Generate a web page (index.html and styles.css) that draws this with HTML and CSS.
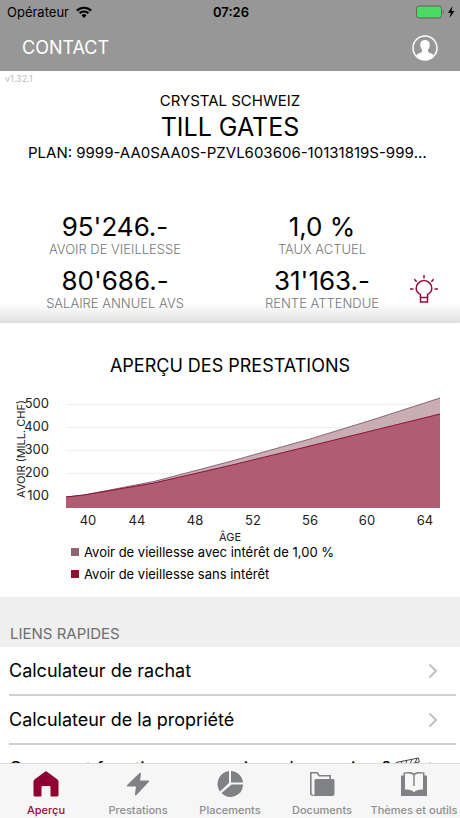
FILE: index.html
```
<!DOCTYPE html>
<html lang="fr">
<head>
    <meta charset="UTF-8">
    <meta name="viewport" content="width=device-width, initial-scale=1.0">
    <title>Aperçu</title>
    <link rel="stylesheet" href="styles.css">
</head>
<body>

<header class="topbar">
    <div class="status">
        <div class="carrier">
            <span>Opérateur</span>
            <svg width="16" height="12" viewBox="0 0 16 12" fill="none" stroke="#000" stroke-width="2.2">
                <path d="M1 4.6a10 10 0 0 1 14 0"/>
                <path d="M3.6 7.3a6.3 6.3 0 0 1 8.8 0"/>
                <path d="M8 12L5.500 9.300a3.600 3.600 0 0 1 5 0z" fill="#000" stroke="none"/>
            </svg>
        </div>
        <time class="clock">07:26</time>
        <div class="battery">
            <svg width="40" height="14" viewBox="0 0 40 14">
                <rect x="1.500" y="1" width="25" height="12" rx="2.500" fill="#4cd964" stroke="#626262"/>
                <path d="M28 5v4c1-.5 1-3.500 0-4z" fill="#626262"/>
                <path d="M37.500 1L33 7.800h2.800L34.500 13 39.500 6h-3z" fill="#000"/>
            </svg>
        </div>
    </div>
    <nav class="navbar">
        <a class="contact" href="#contact">CONTACT</a>
        <button class="profile" type="button" aria-label="Profil">
            <svg width="26" height="26" viewBox="0 0 26 26">
                <circle cx="13" cy="13" r="12" fill="none" stroke="#fff" stroke-width="1.500"/>
                <path d="M13 5c3.200 0 4.900 2.200 4.700 5.200-.1 2-.8 3.400-1.700 4.400v1.900c.3 1.500 4.500 1.700 5.800 4A12 12 0 0 1 13 25a12 12 0 0 1-8.800-4.500c1.300-2.300 5.500-2.500 5.800-4v-1.900c-.9-1-1.600-2.400-1.700-4.400C8.100 7.200 9.800 5 13 5z" fill="#fff"/>
            </svg>
        </button>
    </nav>
</header>

<main class="content">
    <section class="summary">
        <p class="version">v1.32.1</p>
        <p class="company">CRYSTAL SCHWEIZ</p>
        <h1>TILL GATES</h1>
        <p class="plan">PLAN: 9999-AA0SAA0S-PZVL603606-10131819S-99999999</p>

        <div class="figures">
            <div class="figure">
                <strong>95'246.-</strong>
                <span>AVOIR DE VIEILLESSE</span>
            </div>
            <div class="figure">
                <strong>1,0 %</strong>
                <span>TAUX ACTUEL</span>
            </div>
            <div class="figure first">
                <strong>80'686.-</strong>
                <span>SALAIRE ANNUEL AVS</span>
            </div>
            <div class="figure">
                <strong>31'163.-</strong>
                <span>RENTE ATTENDUE</span>
            </div>
            <button class="tip" type="button" aria-label="Conseil">
                <svg width="28" height="28" viewBox="0 0 28 28" fill="none" stroke="#970c39" stroke-width="1.500">
                    <path d="M10.500 22.500v-3.200c-2.600-1.300-4.300-3.300-4.300-5.900a7.800 7.800 0 0 1 15.600 0c0 2.600-1.700 4.600-4.300 5.900v3.200"/>
                    <path d="M10.500 22.500h7v4.500h-7z"/>
                    <path d="M14 0v3.500M0 14h3.500M24.500 14H28M4.300 4.300l2.300 2.300M23.700 4.300l-2.300 2.300"/>
                </svg>
            </button>
        </div>
    </section>

    <section class="benefits">
        <h2>APERÇU DES PRESTATIONS</h2>
        <svg class="chart" viewBox="0 0 460 148" role="img" aria-label="Évolution de l'avoir de vieillesse">
            <path class="grid-line" d="M66 11.500H440M66 34.500H440M66 57.500H440M66 80.500H440M66 103.500H440"/>
            <path class="area-with" d="M66 104L84 102 154 88.500 230 68.500 310 46 375 26 440 5V115H66z"/>
            <path class="line-with" d="M66 104L84 102 154 88.500 230 68.500 310 46 375 26 440 5"/>
            <path class="area-without" d="M66 104L84 102 154 90 230 72.500 310 53 375 37 440 21V115H66z"/>
            <path class="line-without" d="M66 104L84 102 154 90 230 72.500 310 53 375 37 440 21"/>
            <g class="y-labels">
                <text x="49" y="15">500</text>
                <text x="49" y="38">400</text>
                <text x="49" y="61">300</text>
                <text x="49" y="84">200</text>
                <text x="49" y="107">100</text>
            </g>
            <g class="x-labels">
                <text x="88" y="132">40</text>
                <text x="137" y="132">44</text>
                <text x="195" y="132">48</text>
                <text x="253" y="132">52</text>
                <text x="310" y="132">56</text>
                <text x="367" y="132">60</text>
                <text x="425" y="132">64</text>
            </g>
            <text class="axis-title" x="230" y="148">ÂGE</text>
            <text class="axis-title" transform="translate(25 56) rotate(-90)">AVOIR (MILL. CHF)</text>
        </svg>
        <ul class="legend">
            <li class="with">Avoir de vieillesse avec intérêt de 1,00 %</li>
            <li class="without">Avoir de vieillesse sans intérêt</li>
        </ul>
    </section>

    <section class="links">
        <h3>LIENS RAPIDES</h3>
        <a href="#rachat">
            <span>Calculateur de rachat</span>
            <svg class="chevron" width="10" height="16" viewBox="0 0 10 16"><path d="M1.500 1.500L8 8l-6.500 6.500"/></svg>
        </a>
        <a href="#propriete">
            <span>Calculateur de la propriété</span>
            <svg class="chevron" width="10" height="16" viewBox="0 0 10 16"><path d="M1.500 1.500L8 8l-6.500 6.500"/></svg>
        </a>
        <a href="#caisse">
            <span>Comment fonctionne ma caisse de pension ?</span>
            <svg class="clap" width="26" height="24" viewBox="0 0 26 24" fill="none" stroke="#444">
                <path d="M1 5.500L23.500 1l.8 4L2 9.500zM2 9.500h22V23H2z"/>
                <path d="M5 9l2-4.500M10 8l2-4.500M15 7l2-4.500M20 6l2-4.500"/>
            </svg>
            <svg class="chevron" width="10" height="16" viewBox="0 0 10 16"><path d="M1.500 1.500L8 8l-6.500 6.500"/></svg>
        </a>
    </section>
</main>

<nav class="tabbar">
    <a class="active" href="#apercu">
        <svg width="26" height="26" viewBox="0 0 26 26"><path d="M12 .7q1-.8 2 0L24.500 8.500q1 .8 1 2V24q0 1.500-1.500 1.500h-5.500q-1 0-1-1V16q0-1-1-1h-7q-1 0-1 1v8.500q0 1-1 1H2Q.5 25.500.5 24V10.500q0-1.200 1-2z"/></svg>
        <span>Aperçu</span>
    </a>
    <a href="#prestations">
        <svg width="26" height="26" viewBox="0 0 26 26"><path d="M14.500 2q1.500-.6 1.500 1L15 9.500h8.500q1.200.2.400 1.200L11.500 24q-1.500 1-1.600-.6l1.100-8H2.500q-1.400-.2-.4-1.300z"/></svg>
        <span>Prestations</span>
    </a>
    <a href="#placements">
        <svg width="26" height="26" viewBox="0 0 26 26"><path d="M12 0v12L3 20.500A13 13 0 0 1 12 0zM14 0a12.500 12.500 0 0 1 12 11.500H14zM14.500 13.500H26A12.500 12.500 0 0 1 4.500 22z"/></svg>
        <span>Placements</span>
    </a>
    <a href="#documents">
        <svg width="26" height="26" viewBox="0 0 26 26"><path d="M4 24.200q-2.200-.2-2.200-2.200V1.800h6.400l2 3h11V8" fill="none" stroke="#808184" stroke-width="1.600"/><path d="M7 8h17q1.500 0 1.500 1.500V23a2 2 0 0 1-2 2H3.500q2-.3 2-2V9.500Q5.500 8 7 8z"/></svg>
        <span>Documents</span>
    </a>
    <a href="#themes">
        <svg width="28" height="26" viewBox="0 0 28 26"><path fill-rule="evenodd" d="M3.500 1.500c4-.8 8-.8 10.500 1 2.500-1.800 6.500-1.800 10.500-1v3H27V25H1V4.500h2.500zM5 2.800V18.500c3.500-.4 7 .3 9 2.800 2-2.500 5.500-3.200 9-2.800V2.800c-3.500-.6-7.200-.3-8.300 1.500V15h-1.400V4.300C12.200 2.500 8.500 2.200 5 2.800z"/></svg>
        <span>Thèmes et outils</span>
    </a>
</nav>

</body>
</html>
```
FILE: styles.css
```
* {
    box-sizing: border-box;
}
body {
    display: flex;
    flex-direction: column;
    height: 100vh;
    margin: 0;
    font-family: Inter, "Liberation Sans", sans-serif;
    color: #000;
    background-color: #fff;
    overflow: hidden;
}
p, h1, h2, h3, ul {
    margin: 0;
    padding: 0;
    font-weight: 400;
}
a {
    color: inherit;
    text-decoration: none;
}
button {
    padding: 0;
    border: none;
    background: none;
}
svg {
    display: block;
    flex: none;
}
.topbar {
    flex: none;
    background-color: #979797;
}
.status {
    display: grid;
    grid-template-columns: 1fr auto 1fr;
    align-items: center;
    height: 24px;
    padding: 0 5px 0 7px;
    font-size: 13px;
}
.carrier {
    display: flex;
    align-items: center;
    gap: 7px;
}
.clock {
    font-weight: 600;
}
.battery {
    justify-self: end;
}
.navbar {
    display: flex;
    align-items: center;
    justify-content: space-between;
    height: 47px;
    padding: 0 22px;
    color: #fff;
}
.contact {
    font-size: 18px;
}
.content {
    flex: 1;
    min-height: 0;
    overflow: hidden;
}
.summary {
    padding-bottom: 12px;
    text-align: center;
    background: linear-gradient(to top, #e0e0e0, #fff 20px);
}
.version {
    margin-bottom: 2px;
    padding: 0 5px;
    font-size: 9px;
    line-height: 16px;
    text-align: left;
    color: #bbb;
}
.company, .plan {
    font-size: 15px;
    line-height: 24px;
}
.plan {
    padding: 0 28px;
    overflow: hidden;
    text-overflow: ellipsis;
    white-space: nowrap;
}
h1 {
    font-size: 25px;
    line-height: 28px;
}
.figures {
    display: grid;
    grid-template-columns: 5fr 4fr 1fr;
    row-gap: 10px;
    padding-top: 48px;
}
.figure {
    display: flex;
    flex-direction: column;
}
.figure.first {
    grid-column: 1;
}
.figure strong {
    font-size: 26px;
    font-weight: 400;
    line-height: 28px;
}
.figure span {
    font-size: 13px;
    font-weight: 300;
    line-height: 16px;
    color: #777;
}
.tip {
    grid-column: 3;
    grid-row: 2;
    align-self: center;
    justify-self: start;
    margin-left: -4px;
}
.benefits {
    padding: 28px 0 12px;
}
h2 {
    font-size: 18px;
    line-height: 30px;
    text-align: center;
}
.chart {
    width: 100%;
    margin-top: 12px;
    overflow: visible;
}
.chart text {
    fill: #222;
    font-size: 13px;
}
.y-labels {
    text-anchor: end;
}
.x-labels, .axis-title {
    text-anchor: middle;
}
.chart .axis-title {
    font-size: 11px;
}
.grid-line {
    stroke: #f0f0f0;
}
.area-with {
    fill: #c8adb5;
}
.area-without {
    fill: #b05d73;
}
.line-with, .line-without {
    fill: none;
    stroke: #8e6575;
}
.line-without {
    stroke: #8f0f36;
}
.legend {
    padding-left: 71px;
    font-size: 13px;
    line-height: 22px;
    list-style: none;
}
.legend li {
    display: flex;
    align-items: center;
    gap: 5px;
}
.legend li::before {
    width: 8px;
    height: 8px;
    background-color: #8e6575;
    content: "";
}
.legend .without::before {
    background-color: #970c30;
}
h3 {
    padding: 24px 10px 0;
    font-size: 15px;
    line-height: 26px;
    color: #6e6e6e;
    background-color: #efefef;
}
.links a {
    display: flex;
    align-items: center;
    height: 49px;
    margin: 0 4px 0 9px;
    padding-right: 18px;
    border-bottom: 2px solid #d0d0d0;
    font-size: 18px;
    white-space: nowrap;
}
.chevron {
    margin-left: auto;
    fill: none;
    stroke: #c0c0c0;
    stroke-width: 2;
}
.clap {
    margin-left: 4px;
}
.tabbar {
    display: grid;
    grid-template-columns: repeat(5, 1fr);
    flex: none;
    height: 55px;
    border-top: 1px solid #ddd;
    background-color: #f6f6f6;
    color: #8e8e8e;
}
.tabbar a {
    display: flex;
    flex-direction: column;
    align-items: center;
    gap: 5px;
    padding-top: 7px;
    font-size: 11px;
    font-weight: 500;
    line-height: 16px;
    white-space: nowrap;
}
.tabbar svg {
    fill: #808184;
}
.tabbar .active {
    color: #970c39;
}
.tabbar .active svg {
    fill: #8f0033;
}
```
